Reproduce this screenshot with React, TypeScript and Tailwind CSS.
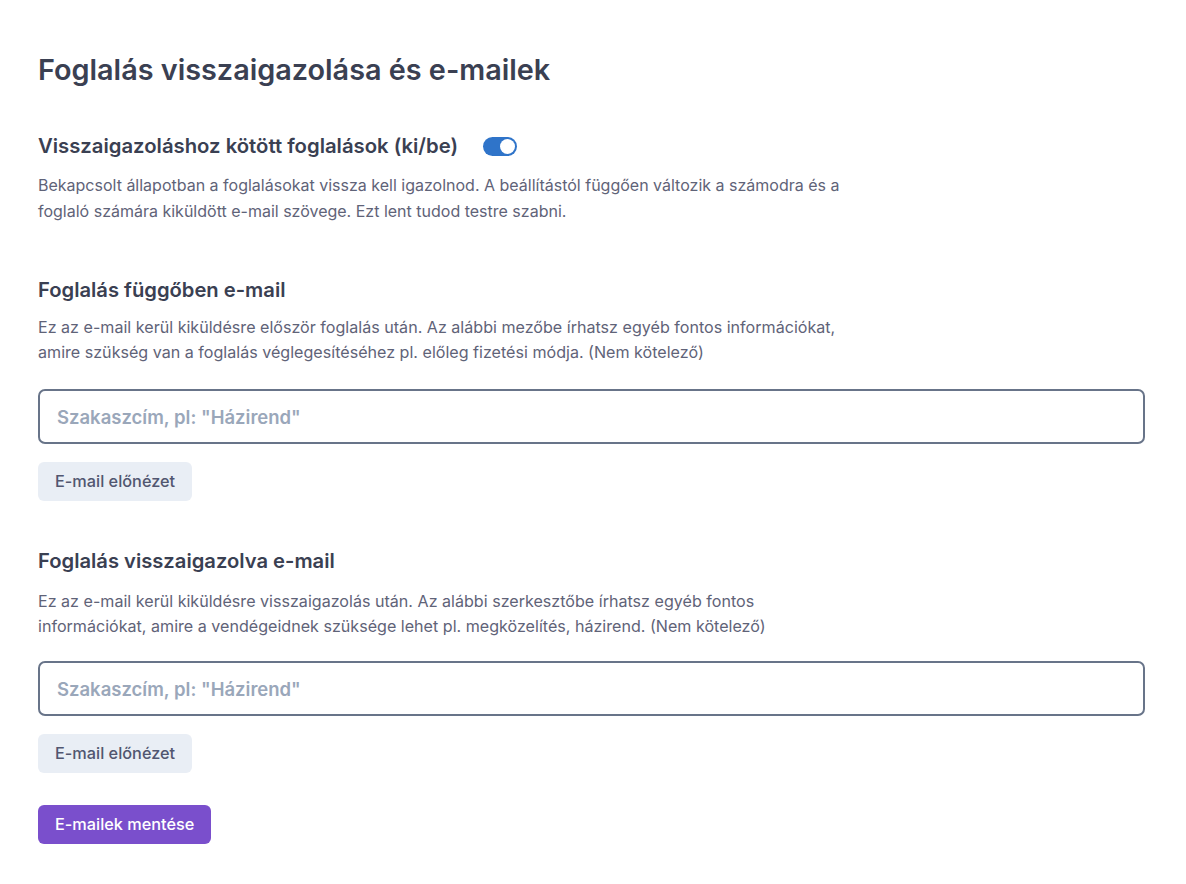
import React from "react";

function Section({ title, desc, second }: { title: string; desc: React.ReactNode; second?: boolean }) {
  return (
    <div className="flex flex-col">
      <h3 className="text-[20.2px] leading-[28px] font-semibold text-[#3a4052]">{title}</h3>
      <p className={(second ? "mt-[14px]" : "mt-[11px]") + " max-w-[826px] text-[16.1px] leading-[25px] text-[#5f6378]"}>{desc}</p>
      <input
        className={(second ? "mt-[22px]" : "mt-[24px]") + " h-[55px] w-full rounded-[7px] border-2 border-[#687489] px-[17px] text-[18.5px] font-semibold text-[#3a4052] placeholder:text-[#9aa7ba] outline-none"}
        placeholder={'Szakaszcím, pl: "Házirend"'}
      />
      <div className="mt-[18px]">
        <button className="h-[39px] rounded-[6px] bg-[#e9eef5] px-[17px] text-[16.3px] font-medium text-[#515670]">
          E-mail előnézet
        </button>
      </div>
    </div>
  );
}

export default function App() {
  return (
    <div className="min-h-[884px] w-full bg-white px-[38px] pt-[51px] pb-[38px]" style={{ fontFamily: "Inter, 'Noto Sans', sans-serif" }}>
      <div className="w-[1107px]">
        <h1 className="text-[28.8px] leading-[38px] font-semibold text-[#3a4052]">
          Foglalás visszaigazolása és e-mailek
        </h1>
        <div className="mt-[43px] flex items-center gap-[25px]">
          <h2 className="text-[20.3px] leading-[28px] font-semibold text-[#3a4052]">
            Visszaigazoláshoz kötött foglalások (ki/be)
          </h2>
          <div className="flex h-[19px] w-[34px] items-center justify-end rounded-full bg-[#2f74c9] px-[2px]">
            <div className="h-[15px] w-[15px] rounded-full bg-white" />
          </div>
        </div>
        <p className="mt-[12px] max-w-[826px] text-[16px] leading-[26px] text-[#5f6378]">
          Bekapcsolt állapotban a foglalásokat vissza kell igazolnod. A beállítástól függően változik a számodra és a foglaló számára kiküldött e-mail szövege. Ezt lent tudod testre szabni.
        </p>
        <div className="mt-[52px]">
          <Section
            title="Foglalás függőben e-mail"
            desc="Ez az e-mail kerül kiküldésre először foglalás után. Az alábbi mezőbe írhatsz egyéb fontos információkat, amire szükség van a foglalás véglegesítéséhez pl. előleg fizetési módja. (Nem kötelező)"
          />
        </div>
        <div className="mt-[46px]">
          <Section
            second
            title="Foglalás visszaigazolva e-mail"
            desc="Ez az e-mail kerül kiküldésre visszaigazolás után. Az alábbi szerkesztőbe írhatsz egyéb fontos információkat, amire a vendégeidnek szüksége lehet pl. megközelítés, házirend. (Nem kötelező)"
          />
        </div>
        <button className="mt-[32px] h-[39px] rounded-[6px] bg-[#7a4fcc] px-[17px] text-[16.3px] font-medium text-white">
          E-mailek mentése
        </button>
      </div>
    </div>
  );
}
